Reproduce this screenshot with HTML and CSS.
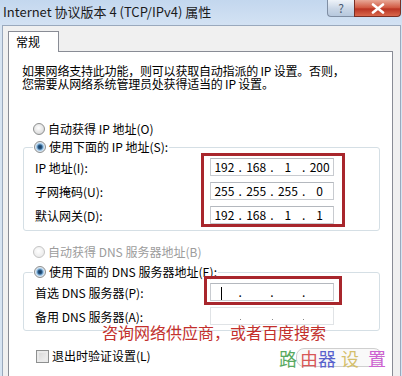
FILE: index.html
```html
<!DOCTYPE html>
<html lang="zh-CN">
<head>
    <meta charset="UTF-8">
    <meta name="viewport" content="width=device-width, initial-scale=1.0">
    <title>Internet 协议版本 4 (TCP/IPv4) 属性</title>
    <link rel="stylesheet" href="styles.css">
</head>
<body>

    <div class="window">
        <div class="titlebar">
            <div class="title">Internet 协议版本 4 (TCP/IPv4) 属性</div>
            <div class="controls">
                <div class="btn-help">?</div>
                <div class="btn-close">
                    <svg width="16" height="11" viewBox="0 0 16 11">
                        <path d="M3 1.5 L13 9.5 M13 1.5 L3 9.5" stroke="#fff" stroke-width="2.6" stroke-linecap="round"/>
                    </svg>
                </div>
            </div>
        </div>

        <div class="client">
            <div class="tabs">
                <div class="tab">常规</div>
            </div>
            <div class="panel">
                <p class="intro">如果网络支持此功能，则可以获取自动指派的 IP 设置。否则，<br>您需要从网络系统管理员处获得适当的 IP 设置。</p>

                <div class="option first">
                    <span class="radio"></span>自动获得 IP 地址(O)
                </div>

                <fieldset class="group">
                    <legend><span class="option"><span class="radio on"></span>使用下面的 IP 地址(S):</span></legend>
                    <div class="rows">
                        <div class="label">IP 地址(I):</div>
                        <div class="ipbox">
                            <span class="seg">192</span><span class="dot">.</span><span class="seg">168</span><span class="dot">.</span><span class="seg">1</span><span class="dot">.</span><span class="seg">200</span>
                        </div>
                        <div class="label">子网掩码(U):</div>
                        <div class="ipbox">
                            <span class="seg">255</span><span class="dot">.</span><span class="seg">255</span><span class="dot">.</span><span class="seg">255</span><span class="dot">.</span><span class="seg">0</span>
                        </div>
                        <div class="label">默认网关(D):</div>
                        <div class="ipbox">
                            <span class="seg">192</span><span class="dot">.</span><span class="seg">168</span><span class="dot">.</span><span class="seg">1</span><span class="dot">.</span><span class="seg">1</span>
                        </div>
                    </div>
                </fieldset>

                <div class="option disabled second">
                    <span class="radio"></span>自动获得 DNS 服务器地址(B)
                </div>

                <fieldset class="group dns">
                    <legend><span class="option"><span class="radio on"></span>使用下面的 DNS 服务器地址(E):</span></legend>
                    <div class="rows">
                        <div class="label">首选 DNS 服务器(P):</div>
                        <div class="ipbox">
                            <span class="seg"><span class="caret"></span></span><span class="dot">.</span><span class="seg"></span><span class="dot">.</span><span class="seg"></span><span class="dot">.</span><span class="seg"></span>
                        </div>
                        <div class="label">备用 DNS 服务器(A):</div>
                        <div class="ipbox faint">
                            <span class="seg"></span><span class="pip"></span><span class="seg"></span><span class="pip"></span><span class="seg"></span><span class="pip"></span><span class="seg"></span>
                        </div>
                    </div>
                </fieldset>

                <div class="option check-row">
                    <span class="checkbox"></span>退出时验证设置(L)
                </div>

                <!-- annotations drawn over the dialog -->
                <div class="mark mark-ip"></div>
                <div class="mark mark-dns"></div>
                <div class="note">咨询网络供应商，或者百度搜索</div>
                <div class="stamp">
                    <span class="stamp-box"></span>
                    <span class="c1">路</span><span class="c2">由</span><span class="c3">器</span><span class="c4">设</span><span class="c5">置</span>
                </div>
            </div>
        </div>
    </div>

</body>
</html>
```

FILE: styles.css
```css
body {
    margin: 0;
    width: 402px;
    height: 376px;
    overflow: hidden;
    font-family: "Noto Sans CJK SC", "Liberation Sans", sans-serif;
    font-size: 12px;
    color: #000;
    background-color: #d7e4f2;
}
.window {
    display: flex;
    flex-direction: column;
    height: 376px;
}
.titlebar {
    height: 25px;
    display: flex;
    align-items: flex-start;
    background: linear-gradient(#c3d7ee, #d3e2f3);
}
.title {
    padding: 3px 0 0 3px;
    font-size: 13px;
    line-height: 18px;
    color: #1b1b1b;
}
.controls {
    margin-left: auto;
    margin-right: 1px;
    display: flex;
}
.btn-help {
    width: 27px;
    height: 17px;
    box-sizing: border-box;
    border: 1px solid #7f8ea3;
    border-top: none;
    border-right: none;
    border-radius: 0 0 0 4px;
    background: linear-gradient(#eef3f9, #c9d6e6 55%, #b7c8dd);
    color: #4a5a70;
    font-size: 12px;
    line-height: 15px;
    text-align: center;
}
.btn-close {
    width: 47px;
    height: 17px;
    box-sizing: border-box;
    border: 1px solid #7a2f24;
    border-top: none;
    border-radius: 0 0 4px 0;
    background: linear-gradient(#e8a897, #d0563f 50%, #b93322 55%, #d9684c);
    display: flex;
    align-items: center;
    justify-content: center;
}
.client {
    flex: 1;
    display: flex;
    flex-direction: column;
    margin: 0 1px 0 2px;
    padding: 5px 7px 0 5px;
    border: 1px solid #9aa9bd;
    border-bottom: none;
    background: #f0f0f0;
}
.tabs {
    display: flex;
}
.tab {
    width: 51px;
    height: 21px;
    box-sizing: border-box;
    padding-left: 7px;
    border: 1px solid #898c95;
    border-bottom: none;
    margin-bottom: -1px;
    background: #fff;
    line-height: 20px;
    position: relative;
    z-index: 1;
}
.panel {
    flex: 1;
    position: relative;
    padding: 12px 12px 0 13px;
    border: 1px solid #898c95;
    border-bottom: none;
    background: #fff;
}
.intro {
    margin: 0;
    line-height: 13px;
    letter-spacing: -0.2px;
}
.option {
    display: flex;
    align-items: center;
    height: 16px;
    line-height: 16px;
    white-space: nowrap;
}
.option.first {
    margin: 31px 0 0 11px;
}
.option.second {
    margin: 13px 0 0 11px;
}
.option.disabled {
    color: #9c9c9c;
}
.radio {
    width: 12px;
    height: 12px;
    box-sizing: border-box;
    margin-right: 3px;
    border-radius: 50%;
    border: 1px solid #8e9090;
    background: radial-gradient(circle at 45% 40%, #ffffff, #e2e2e2 60%, #c9c9c9);
}
.radio.on {
    background: radial-gradient(circle, #173553 0, #2b5b88 2px, #8fbde2 3.2px, #dfe9f3 4.5px, #c9c9c9);
}
.disabled .radio {
    border-color: #c4c4c4;
    background: radial-gradient(circle at 45% 40%, #ffffff, #ececec 70%);
}
.group {
    margin: 2px 0 0 1px;
    padding: 0 0 3px 0;
    border: 1px solid #d5dfe5;
    border-radius: 3px;
}
.group.dns {
    margin-top: 4px;
    padding-bottom: 2px;
}
.group legend {
    margin-left: 9px;
    padding: 0 1px;
}
.rows {
    display: grid;
    grid-template-columns: 175px 124px;
    grid-auto-rows: 24px;
    align-items: center;
    padding-left: 11px;
}
.label {
    white-space: nowrap;
}
.ipbox {
    height: 18px;
    box-sizing: border-box;
    display: flex;
    align-items: center;
    border: 1px solid #c8cbd0;
    border-top-color: #b4b8be;
    background: #fff;
    line-height: 16px;
}
.ipbox.faint {
    border-color: #e0e3e6;
}
.seg {
    flex: 1;
    text-align: center;
}
.dot {
    width: 5px;
    text-align: center;
}
.pip {
    width: 1px;
    height: 1px;
    margin: 6px 2px 0;
    background: #8a8a8a;
}
.caret {
    display: inline-block;
    width: 1px;
    height: 13px;
    margin-left: -6px;
    background: #000;
    vertical-align: middle;
}
.check-row {
    margin: 17px 0 0 14px;
}
.checkbox {
    width: 13px;
    height: 13px;
    box-sizing: border-box;
    margin-right: 3px;
    border: 1px solid #8e9090;
    background: linear-gradient(135deg, #d4d4d4, #f4f4f4);
    box-shadow: inset 0 0 0 2px #eaeaea;
}
.mark {
    position: absolute;
    box-sizing: border-box;
    border: 3px solid #a8262c;
}
.mark-ip {
    left: 192px;
    top: 101px;
    width: 144px;
    height: 74px;
}
.mark-dns {
    left: 195px;
    top: 224px;
    width: 138px;
    height: 29px;
}
.note {
    position: absolute;
    left: 93px;
    top: 272px;
    font-size: 16px;
    line-height: 17px;
    color: #c3302c;
    white-space: nowrap;
}
.stamp {
    position: absolute;
    left: 270px;
    top: 293px;
    width: 114px;
    height: 26px;
    font-size: 18px;
    line-height: 26px;
    white-space: nowrap;
    opacity: 0.85;
}
.stamp-box {
    position: absolute;
    left: 17px;
    top: 3px;
    width: 84px;
    height: 17px;
    border: 1px solid #c7c7c7;
    border-radius: 8px;
    background: rgba(245, 245, 245, 0.6);
}
.stamp span + span {
    position: relative;
}
.c1 { color: #3c9b45; }
.c2 { color: #d23a3a; margin-left: 3px; }
.c3 { color: #3b47c4; margin-left: 0; }
.c4 { color: #cdb451; margin-left: 5px; }
.c5 { color: #c547c9; margin-left: 9px; }
```
